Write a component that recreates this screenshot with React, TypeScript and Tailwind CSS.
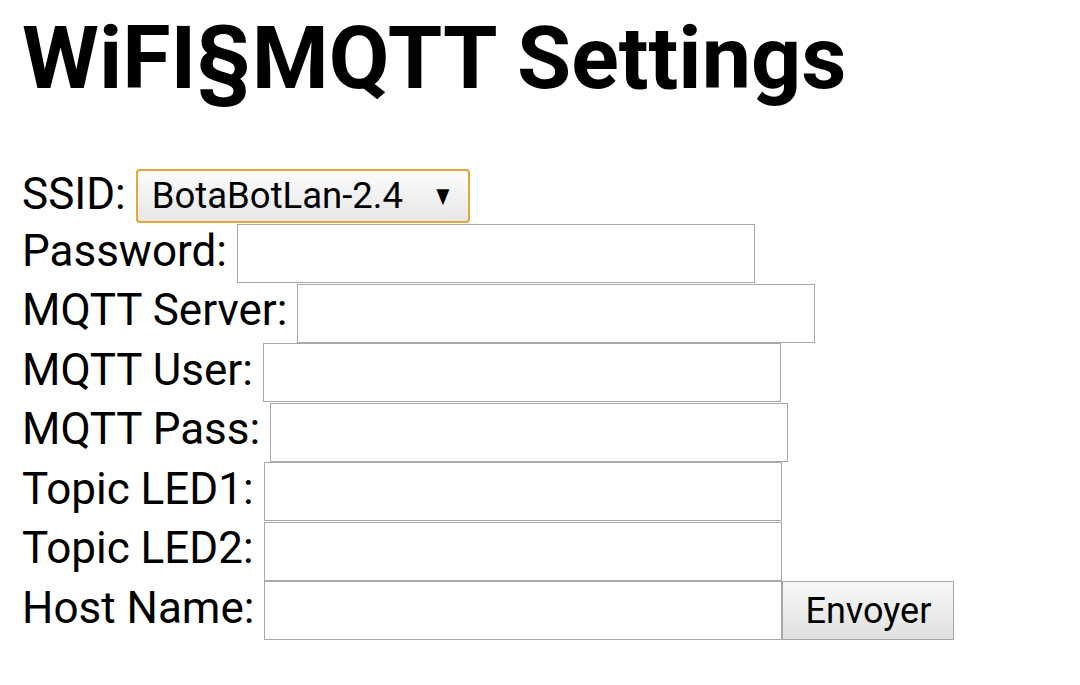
import React from "react";

const rows = [
  "Password:",
  "MQTT Server:",
  "MQTT User:",
  "MQTT Pass:",
  "Topic LED1:",
  "Topic LED2:",
];

export default function App() {
  return (
    <div className="min-h-[685px] w-[1080px] bg-white text-black" style={{ fontFamily: "Roboto, 'Noto Sans', sans-serif" }}>
      <div className="pl-[22px] pt-[8px]">
        <h1 className="text-[88px] font-bold leading-[100px]">WiFI§MQTT Settings</h1>
        <div className="mt-[60px] flex flex-col text-[44px] leading-none">
          <div className="flex h-[56px] items-center gap-[10px]">
            <span className="-mt-[4px]">SSID:</span>
            <div className="flex h-[54px] w-[334px] items-center justify-between rounded-[4px] border-2 border-[#e3a63a] bg-gradient-to-b from-[#fdfdfd] to-[#e6e6e6] pl-[14px] pr-[14px] text-[36.5px]">
              <span>BotaBotLan-2.4</span>
              <span className="text-[22px] scale-y-125">▼</span>
            </div>
          </div>
          {rows.map((r) => (
            <div key={r} className="flex h-[59.5px] items-center gap-[10px]">
              <span className="-mt-[6px]">{r}</span>
              <div className="h-[59px] w-[518px] border border-[#a8a8a8] bg-white" />
            </div>
          ))}
          <div className="flex h-[59.5px] items-center gap-[10px]">
            <span className="-mt-[6px]">Host Name:</span>
            <div className="flex">
              <div className="h-[59px] w-[518px] border border-[#a8a8a8] bg-white" />
              <div className="flex h-[59px] w-[172px] items-center justify-center border border-[#a8a8a8] bg-gradient-to-b from-[#f8f8f8] to-[#e0e0e0] text-[36px]">
                Envoyer
              </div>
            </div>
          </div>
        </div>
      </div>
    </div>
  );
}
